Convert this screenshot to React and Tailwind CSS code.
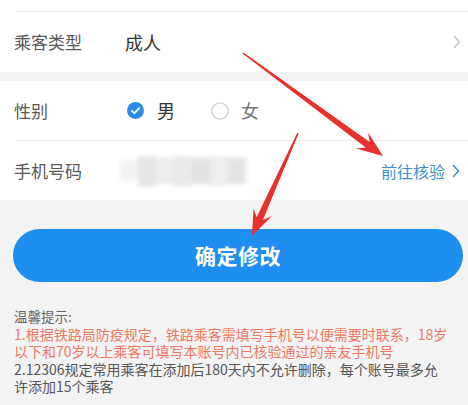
import React from "react";

function arrowPoints(tx, ty, px, py) {
  const dx = px - tx, dy = py - ty;
  const L = Math.hypot(dx, dy);
  const ux = dx / L, uy = dy / L;
  const nx = -uy, ny = ux;
  const bsx = px - 19 * ux, bsy = py - 19 * uy;
  const bhx = px - 26 * ux, bhy = py - 26 * uy;
  const pts = [
    [tx + 0.8 * nx, ty + 0.8 * ny],
    [bsx + 3.4 * nx, bsy + 3.4 * ny],
    [bhx + 10 * nx, bhy + 10 * ny],
    [px, py],
    [bhx - 10 * nx, bhy - 10 * ny],
    [bsx - 3.4 * nx, bsy - 3.4 * ny],
    [tx - 0.8 * nx, ty - 0.8 * ny],
  ];
  return pts.map((p) => p[0].toFixed(1) + "," + p[1].toFixed(1)).join(" ");
}

const font = { fontFamily: '"Noto Sans CJK SC", "Noto Sans", sans-serif' };

function Chevron({ className }) {
  return (
    <svg width="8" height="14" viewBox="0 0 8 14" className={className}>
      <path d="M1.5 1.5 L6.5 7 L1.5 12.5" fill="none" stroke="currentColor" strokeWidth="1.5" strokeLinecap="round" strokeLinejoin="round" />
    </svg>
  );
}

export default function App() {
  return (
    <div className="relative w-[468px] h-[405px] overflow-hidden bg-[#f3f3f4]" style={font}>
      {/* top white strip */}
      <div className="bg-white h-[12px] flex items-end">
        <div className="ml-[15px] flex-1 h-px bg-[#ececec]" />
      </div>
      {/* passenger type */}
      <div className="bg-white h-[60px] flex items-center pl-[14px] pr-[7px]">
        <span className="w-[111px] text-[17px] text-[#5a5a5a]">乘客类型</span>
        <span className="flex-1 text-[18px] text-[#333]">成人</span>
        <Chevron className="text-[#c4c4c4]" />
      </div>
      <div className="h-[9px]" />
      {/* gender */}
      <div className="bg-white">
        <div className="h-[59px] flex items-center pl-[14px]">
          <span className="w-[113px] text-[17px] text-[#5a5a5a]">性别</span>
          <svg width="17" height="17" viewBox="0 0 17 17">
            <circle cx="8.5" cy="8.5" r="8.5" fill="#2a8ce8" />
            <path d="M4.8 8.8 L7.4 11.2 L12.2 6.2" fill="none" stroke="#fff" strokeWidth="1.8" strokeLinecap="round" strokeLinejoin="round" />
          </svg>
          <span className="ml-[13px] text-[18px] text-[#333]">男</span>
          <svg width="18" height="18" viewBox="0 0 18 18" className="ml-[36px]">
            <circle cx="9" cy="9" r="8.2" fill="none" stroke="#cfcfcf" strokeWidth="1.3" />
          </svg>
          <span className="ml-[12px] text-[18px] text-[#777]">女</span>
        </div>
        <div className="ml-[15px] h-px bg-[#ececec]" />
        <div className="h-[59px] flex items-center pl-[14px] pr-[8px]">
          <span className="w-[106px] text-[17px] text-[#5a5a5a]">手机号码</span>
          <div className="relative w-[126px] h-[30px] blur-[2px]">
            <div className="absolute left-0 top-[4px] w-[18px] h-[20px] bg-[#f2f2f2]" />
            <div className="absolute left-[18px] top-0 w-[18px] h-[30px] bg-[#e6e6e6]" />
            <div className="absolute left-[36px] top-[2px] w-[18px] h-[26px] bg-[#ededed]" />
            <div className="absolute left-[54px] top-0 w-[18px] h-[30px] bg-[#e8e8e8]" />
            <div className="absolute left-[72px] top-[2px] w-[18px] h-[26px] bg-[#e2e2e2]" />
            <div className="absolute left-[90px] top-0 w-[18px] h-[30px] bg-[#eeeeee]" />
            <div className="absolute left-[108px] top-[2px] w-[18px] h-[26px] bg-[#e4e4e4]" />
          </div>
          <div className="flex-1" />
          <span className="text-[16px] text-[#3d8fd2]">前往核验</span>
          <Chevron className="ml-[7px] text-[#3d8fd2]" />
        </div>
      </div>
      {/* button */}
      <div className="mt-[29px] ml-[13px] mr-[5px] h-[53px] rounded-full bg-[#1e8ef0] flex items-center justify-center">
        <span className="text-[21px] font-bold text-white tracking-[0.5px]">确定修改</span>
      </div>
      {/* tips */}
      <div className="mt-[26px] pl-[14px] text-[14px] leading-[17.5px] whitespace-nowrap">
        <div className="text-[#666] text-[13.5px]">温馨提示:</div>
        <div className="text-[#ec7a62]">1.根据铁路局防疫规定，铁路乘客需填写手机号以便需要时联系，18岁</div>
        <div className="text-[#ec7a62]">以下和70岁以上乘客可填写本账号内已核验通过的亲友手机号</div>
        <div className="text-[#555]">2.12306规定常用乘客在添加后180天内不允许删除，每个账号最多允</div>
        <div className="text-[#555]">许添加15个乘客</div>
      </div>
      {/* arrows overlay */}
      <svg className="absolute left-0 top-0 pointer-events-none" width="468" height="405" viewBox="0 0 468 405">
        <polygon points={arrowPoints(243, 53, 383, 156)} fill="#e8302c" />
        <polygon points={arrowPoints(298, 133, 252, 236)} fill="#e8302c" />
      </svg>
    </div>
  );
}
